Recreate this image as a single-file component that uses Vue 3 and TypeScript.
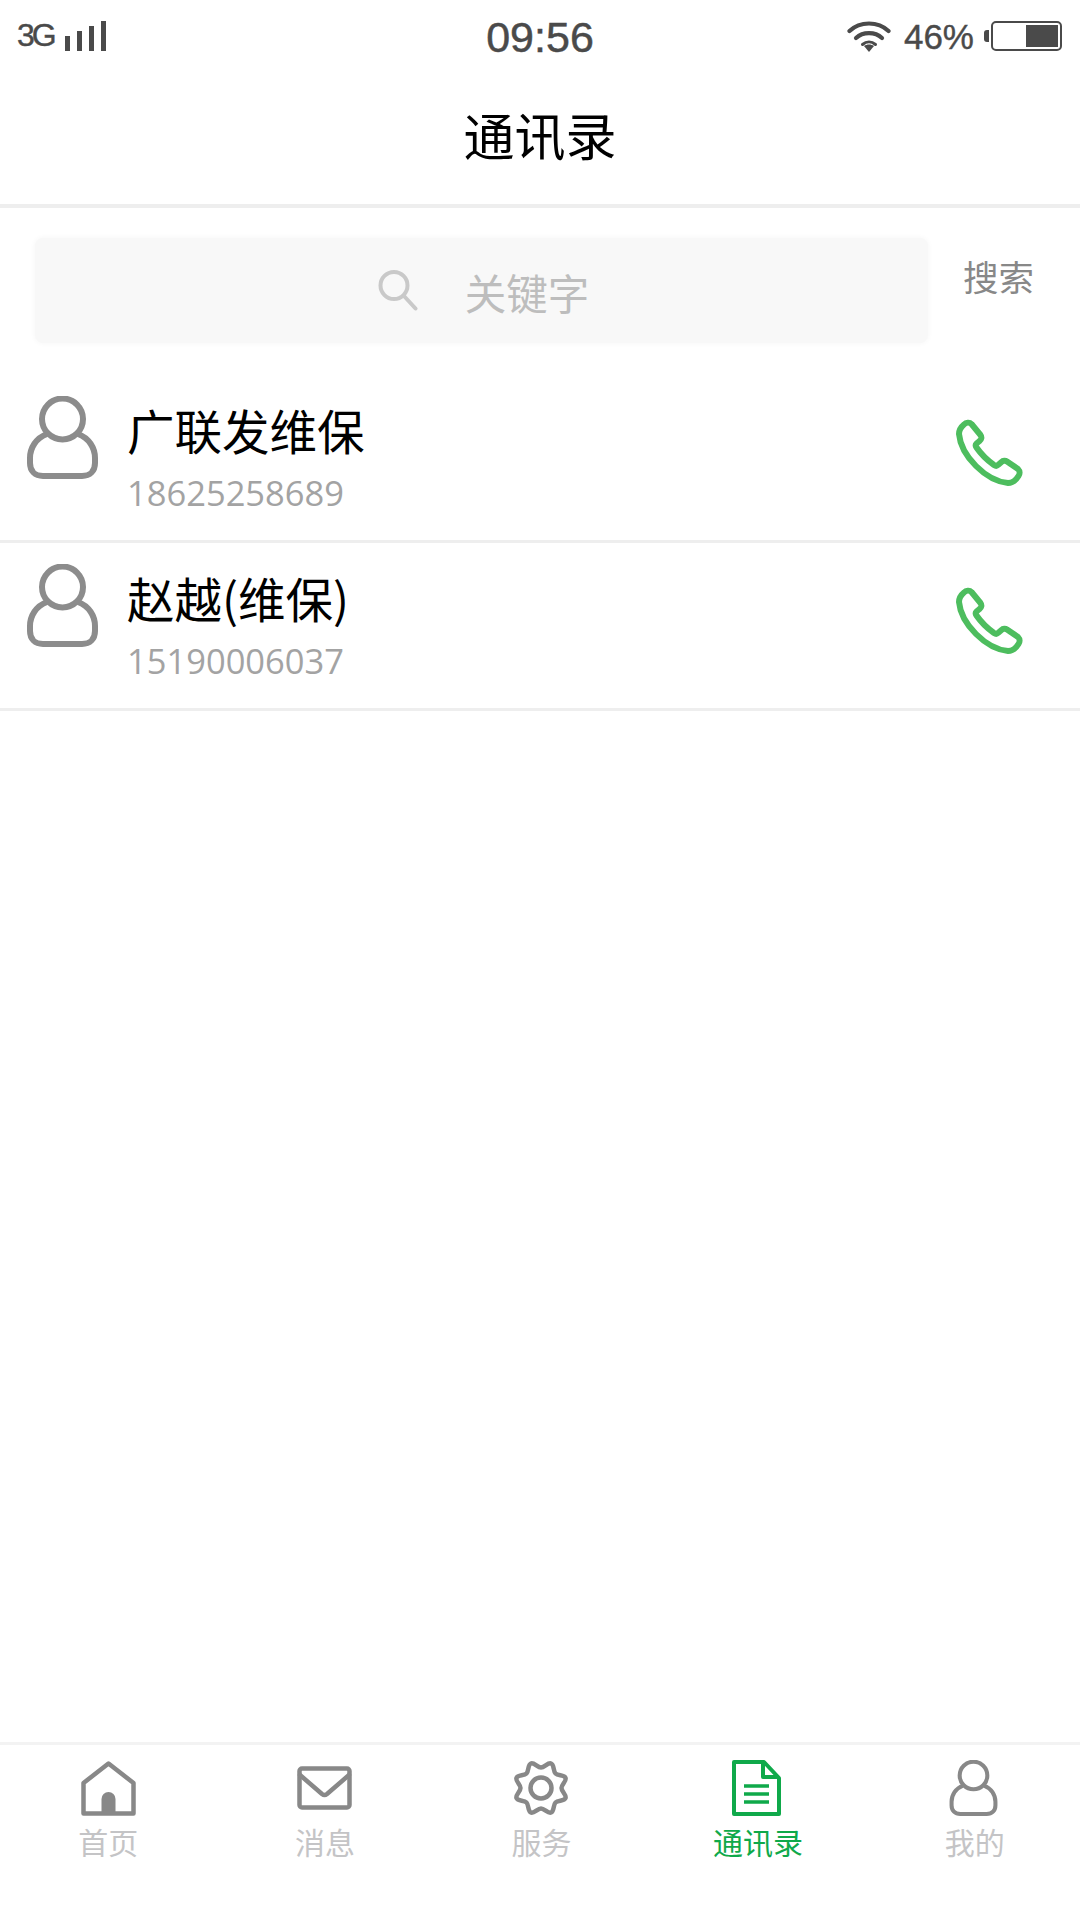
<script setup lang="ts">
const contacts = [
  { name: '广联发维保', phone: '18625258689' },
  { name: '赵越(维保)', phone: '15190006037' }
];

const tabs = [
  { key: 'home', label: '首页' },
  { key: 'mail', label: '消息' },
  { key: 'gear', label: '服务' },
  { key: 'doc', label: '通讯录' },
  { key: 'user', label: '我的' }
];

const signalBars = [15, 20, 25, 30];

// 8 lobes, drawn around the centre of a 58x58 box
const gearPath = (() => {
  const c = 29;
  const polar = (r: number, deg: number, along = 0) => {
    const a = (deg * Math.PI) / 180;
    const x = c + r * Math.cos(a) - along * Math.sin(a);
    const y = c + r * Math.sin(a) + along * Math.cos(a);
    return `${x.toFixed(2)} ${y.toFixed(2)}`;
  };
  const inner = 20.5;
  const outer = 26.5;
  let d = `M${polar(inner, 0)}`;
  for (let i = 0; i < 8; i++) {
    const v = i * 45;
    const l = v + 22.5;
    const next = v + 45;
    d += ` C${polar(inner, v, 3.5)} ${polar(outer, l, -3.5)} ${polar(outer, l)}`;
    d += ` C${polar(outer, l, 3.5)} ${polar(inner, next, -3.5)} ${polar(inner, next)}`;
  }
  return d + ' Z';
})();
</script>

<template>
  <div class="page">
    <div class="status">
      <div class="status-left">
        <span class="net">3G</span>
        <div class="bars">
          <i v-for="h in signalBars" :key="h" class="bar" :style="{ height: h + 'px' }"></i>
        </div>
      </div>
      <div class="clock">09:56</div>
      <div class="status-right">
        <svg class="wifi" viewBox="0 0 44 32" fill="none" stroke="#4a4a4a" stroke-width="4.2" stroke-linecap="round">
          <path d="M2.5 11 C13 1 31 1 41.5 11" />
          <path d="M9 18 C16 11.5 28 11.5 35 18" />
          <path d="M15.5 24.5 C19.5 21 24.5 21 28.5 24.5" stroke-width="3" />
          <path d="M17 26 L22 32 L27 26 C24 24 20 24 17 26 Z" fill="#4a4a4a" stroke="none" />
        </svg>
        <span class="percent">46%</span>
        <div class="battery">
          <i class="nub"></i>
          <i class="level"></i>
        </div>
      </div>
    </div>

    <header class="nav">通讯录</header>

    <div class="search-row">
      <div class="search-box">
        <svg class="search-icon" viewBox="0 0 40 41" fill="none" stroke="#c9c9c9" stroke-width="4" stroke-linecap="round">
          <circle cx="16" cy="15.5" r="13.5" />
          <path d="M26 26 L37.5 38.5" />
        </svg>
        <span class="placeholder">关键字</span>
      </div>
      <span class="search-btn">搜索</span>
    </div>

    <ul class="list">
      <li v-for="c in contacts" :key="c.phone" class="row">
        <svg class="avatar" viewBox="0 0 71 83" fill="none" stroke="#8c8c8c" stroke-width="6">
          <path d="M20 38 C9 42 3 52 3 62 V67 C3 75 8 80 16 80 H55 C63 80 68 75 68 67 V62 C68 52 62 42 51 38" />
          <circle cx="35.5" cy="23" r="20.5" />
        </svg>
        <div class="info">
          <div class="name">{{ c.name }}</div>
          <div class="phone">{{ c.phone }}</div>
        </div>
        <svg class="call" viewBox="0 0 67 67" fill="none" stroke="#4dbd5e" stroke-width="6" stroke-linejoin="round">
          <path d="M8 5.5 C10 3.5 13.5 3 15.5 5 L24.5 16 C26 18 25.5 20.5 23.5 22 L20.5 24.5 C19.5 25.5 19.5 27 20.5 28.5 C25 35 31 41 38 46 C39.5 47 41 47 42 46 L45.5 43 C47 41.5 49.5 41.5 51 42.5 L62 50 C64 52 64 55 62.5 57 C60 61 56 64 52 64 C30 62 5 37 3 15 C3 11 5 8 8 5.5 Z" />
        </svg>
      </li>
    </ul>

    <nav class="tabbar">
      <div v-for="t in tabs" :key="t.key" class="tab" :class="{ active: t.key === 'doc' }">
        <div class="tab-icon">
          <svg v-if="t.key === 'home'" width="55" height="55" viewBox="0 0 55 55" fill="none" stroke="#888" stroke-width="4.5" stroke-linejoin="round">
            <path d="M2.5 52.5 V22 L27.5 2.5 L52.5 22 V52.5 Z" />
            <path d="M20.5 53 V38 a7 7 0 0 1 14 0 V53 Z" fill="#888" stroke="none" />
          </svg>
          <svg v-else-if="t.key === 'mail'" width="55" height="44" viewBox="0 0 55 44" fill="none" stroke="#888" stroke-width="4.5" stroke-linecap="round" stroke-linejoin="round">
            <rect x="2.5" y="2.5" width="50" height="39" rx="2.5" />
            <path d="M3 9 L25 28 Q27.5 30 30 28 L52 9" />
          </svg>
          <svg v-else-if="t.key === 'gear'" width="58" height="58" viewBox="0 0 58 58" fill="none" stroke="#888" stroke-width="4.5">
            <path :d="gearPath" />
            <circle cx="29" cy="29" r="10.5" />
          </svg>
          <svg v-else-if="t.key === 'doc'" class="nudge" width="49" height="56" viewBox="0 0 49 56" fill="none" stroke="#0fa94a" stroke-width="4" stroke-linejoin="round">
            <path d="M2 2 H32 L47 18 V54 H2 Z" />
            <path d="M31 2 V17 H47" />
            <path d="M12 26 H37 M12 34 H37 M12 42 H37" stroke-width="3.5" />
          </svg>
          <svg v-else class="nudge" width="49" height="56" viewBox="0 0 71 83" fill="none" stroke="#888" stroke-width="6">
            <path d="M20 38 C9 42 3 52 3 62 V67 C3 75 8 80 16 80 H55 C63 80 68 75 68 67 V62 C68 52 62 42 51 38" />
            <circle cx="35.5" cy="23" r="20.5" />
          </svg>
        </div>
        <span class="tab-label">{{ t.label }}</span>
      </div>
    </nav>
  </div>
</template>

<style>
body {
  margin: 0;
  background: #fff;
}
</style>

<style scoped>
.page {
  width: 1080px;
  height: 1920px;
  display: flex;
  flex-direction: column;
  background: #fff;
  font-family: "Noto Sans CJK SC", "Noto Sans", sans-serif;
  overflow: hidden;
}

/* status bar */
.status {
  height: 70px;
  display: grid;
  grid-template-columns: 1fr auto 1fr;
  align-items: center;
  color: #4a4a4a;
  font-family: "Liberation Sans", Arial, sans-serif;
}
.status-left {
  display: flex;
  align-items: center;
  padding-left: 17px;
}
.net {
  font-size: 32px;
  line-height: 34px;
  letter-spacing: -3px;
  margin-right: 11px;
  margin-top: -1px;
  -webkit-text-stroke: 0.4px #4a4a4a;
}
.bars {
  display: flex;
  align-items: flex-end;
  gap: 7px;
  height: 30px;
  margin-top: 2px;
}
.bar {
  display: block;
  width: 5px;
  background: #4a4a4a;
}
.clock {
  font-size: 43px;
  line-height: 46px;
  margin-top: 4px;
  -webkit-text-stroke: 0.5px #4a4a4a;
}
.status-right {
  display: flex;
  align-items: center;
  justify-content: flex-end;
  padding-right: 18px;
}
.wifi {
  width: 44px;
  height: 32px;
  margin-right: 13px;
  margin-top: 2px;
}
.percent {
  font-size: 35px;
  line-height: 40px;
  margin-right: 17px;
  margin-top: 4px;
  -webkit-text-stroke: 0.4px #4a4a4a;
}
.battery {
  position: relative;
  box-sizing: border-box;
  width: 71px;
  height: 30px;
  margin-top: 2px;
  border: 2.5px solid #4a4a4a;
  border-radius: 5px;
}
.nub {
  position: absolute;
  left: -9px;
  top: 7px;
  width: 5px;
  height: 12px;
  background: #4a4a4a;
  border-radius: 3px 0 0 3px;
}
.level {
  position: absolute;
  right: 2px;
  top: 2px;
  bottom: 2px;
  width: 32px;
  background: #4a4a4a;
}

/* title */
.nav {
  box-sizing: border-box;
  height: 138px;
  display: flex;
  align-items: center;
  justify-content: center;
  padding-bottom: 6px;
  font-size: 51px;
  color: #000;
  border-bottom: 4px solid #eeeeee;
}

/* search */
.search-row {
  box-sizing: border-box;
  height: 167px;
  padding: 30px 0 0 35px;
  display: flex;
  align-items: flex-start;
}
.search-box {
  box-sizing: border-box;
  width: 893px;
  height: 105px;
  display: flex;
  align-items: center;
  justify-content: center;
  background: #f8f8f8;
  border-radius: 8px;
  box-shadow: 0 0 5px 1px #f8f8f8;
}
.search-icon {
  width: 40px;
  height: 41px;
  margin-right: 47px;
  margin-left: 4px;
}
.placeholder {
  font-size: 41.5px;
  line-height: 50px;
  color: #bdbdbd;
  margin-top: 3px;
}
.search-btn {
  margin-left: 35px;
  margin-top: 15px;
  font-size: 35.5px;
  line-height: 46px;
  color: #888;
}

/* contacts */
.list {
  flex: 1;
  list-style: none;
  margin: 0;
  padding: 0;
}
.row {
  box-sizing: border-box;
  height: 168px;
  display: flex;
  align-items: flex-start;
  padding-left: 27px;
  border-bottom: 3px solid #eeeeee;
}
.avatar {
  width: 71px;
  height: 83px;
  margin-top: 21px;
  flex: none;
}
.info {
  flex: 1;
  margin-left: 29px;
  margin-top: 25px;
}
.name {
  font-size: 47.5px;
  line-height: 60px;
  color: #000;
}
.phone {
  font-family: "Open Sans", "Noto Sans", sans-serif;
  font-size: 34.5px;
  line-height: 44px;
  color: #a3a3a3;
  margin-top: 11px;
}
.call {
  width: 67px;
  height: 67px;
  margin-top: 44px;
  margin-right: 57px;
  flex: none;
}

/* tab bar */
.tabbar {
  box-sizing: border-box;
  height: 178px;
  display: grid;
  grid-template-columns: repeat(5, 216.6px);
  padding-top: 15px;
  border-top: 3px solid #f3f3f3;
}
.tab {
  display: flex;
  flex-direction: column;
  align-items: center;
  color: #c4c4c6;
}
.tab.active {
  color: #0fa94a;
}
.tab-icon {
  height: 56px;
  display: flex;
  align-items: center;
  justify-content: center;
}
.nudge {
  margin-left: -3px;
}
.tab-label {
  font-size: 30px;
  line-height: 40px;
  margin-top: 5px;
}
</style>
